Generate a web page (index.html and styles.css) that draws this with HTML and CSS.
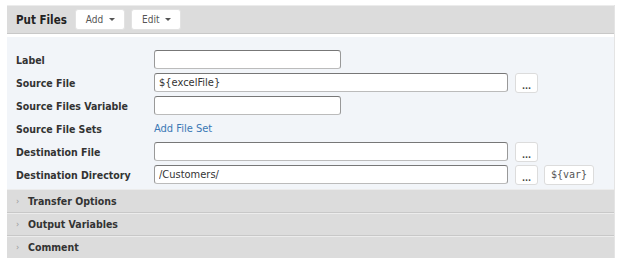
FILE: index.html
```html
<!DOCTYPE html>
<html lang="en">
<head>
  <meta charset="UTF-8" />
  <title>Put Files</title>
  <link rel="stylesheet" href="styles.css">
</head>
<body>
  <div class="panel">
    <div class="panel-head">
      <span class="panel-title">Put Files</span>
      <button class="menu-btn">Add <span class="caret"></span></button>
      <button class="menu-btn">Edit <span class="caret"></span></button>
    </div>
    <div class="panel-body">
      <div class="row">
        <label>Label</label>
        <input type="text" class="short" />
      </div>
      <div class="row">
        <label>Source File</label>
        <input type="text" class="long" value="${excelFile}" />
        <button class="dots">...</button>
      </div>
      <div class="row">
        <label>Source Files Variable</label>
        <input type="text" class="short" />
      </div>
      <div class="row">
        <label>Source File Sets</label>
        <a class="link" href="#">Add File Set</a>
      </div>
      <div class="row">
        <label>Destination File</label>
        <input type="text" class="long" />
        <button class="dots">...</button>
      </div>
      <div class="row">
        <label>Destination Directory</label>
        <input type="text" class="long" value="/Customers/" />
        <button class="dots">...</button>
        <button class="var-btn">${var}</button>
      </div>
    </div>
    <div class="section"><span class="arrow">›</span>Transfer Options</div>
    <div class="section"><span class="arrow">›</span>Output Variables</div>
    <div class="section"><span class="arrow">›</span>Comment</div>
  </div>
</body>
</html>
```

FILE: styles.css
```css
body {
  margin: 0;
  padding: 5px 9px 0 7px;
  font-family: 'DejaVu Sans Condensed', 'DejaVu Sans', Verdana, sans-serif;
  font-size: 11px;
  color: #333;
  background: #fff;
}
.panel {
  border-right: 1px solid #e4e4e4;
}
.panel-head {
  display: flex;
  align-items: center;
  gap: 6px;
  height: 27px;
  padding: 0 9px;
  background: #dcdcdc;
  border-top: 1px solid #ececec;
  border-bottom: 1px solid #c8c8c8;
}
.panel-title {
  font-weight: bold;
  font-size: 11.5px;
  color: #222;
  margin-right: 2px;
}
.menu-btn {
  font-family: inherit;
  font-size: 10px;
  color: #555;
  background: #fff;
  border: 1px solid #e2e2e2;
  border-radius: 3px;
  height: 21px;
  padding: 0 9px 0 10px;
}
.caret {
  display: inline-block;
  width: 0;
  height: 0;
  margin-left: 3px;
  vertical-align: 2px;
  border-left: 3px solid transparent;
  border-right: 3px solid transparent;
  border-top: 3px solid #555;
}
.panel-body {
  background: #f2f5f9;
  border-top: 3px solid #fff;
  padding: 11px 0 3px 9px;
}
.row {
  display: flex;
  align-items: center;
  height: 23px;
}
.row label {
  width: 138px;
  font-weight: bold;
  font-size: 10.5px;
  color: #333;
}
input {
  box-sizing: border-box;
  height: 19px;
  font-family: inherit;
  font-size: 11px;
  color: #333;
  padding: 0 4px;
  background: #fff;
  border: 1px solid #999;
  border-top-color: #777;
  border-bottom-color: #bbb;
  border-radius: 3px;
}
.short { width: 187px; }
.long { width: 354px; }
.dots, .var-btn {
  box-sizing: border-box;
  height: 20px;
  margin-left: 7px;
  background: #fff;
  border: 1px solid #dcdcdc;
  border-radius: 3px;
  color: #444;
  font-family: inherit;
}
.dots {
  width: 23px;
  padding: 6px 0 0;
  font-size: 9px;
  font-weight: bold;
  line-height: 12px;
}
.var-btn {
  width: 50px;
  margin-left: 6px;
  font-family: 'DejaVu Sans Mono', monospace;
  font-size: 10px;
  color: #555;
}
.link {
  color: #3a78b5;
  text-decoration: none;
}
.section {
  display: flex;
  align-items: center;
  height: 22px;
  background: #dcdcdc;
  border-top: 1px solid #ececec;
  padding-left: 9px;
  font-weight: bold;
  font-size: 10.5px;
  color: #333;
}
.section + .section {
  border-top: 1px solid #c8c8c8;
  box-shadow: inset 0 1px 0 #ececec;
}
.arrow {
  color: #999;
  font-weight: normal;
  font-size: 9px;
  width: 12px;
}
```
